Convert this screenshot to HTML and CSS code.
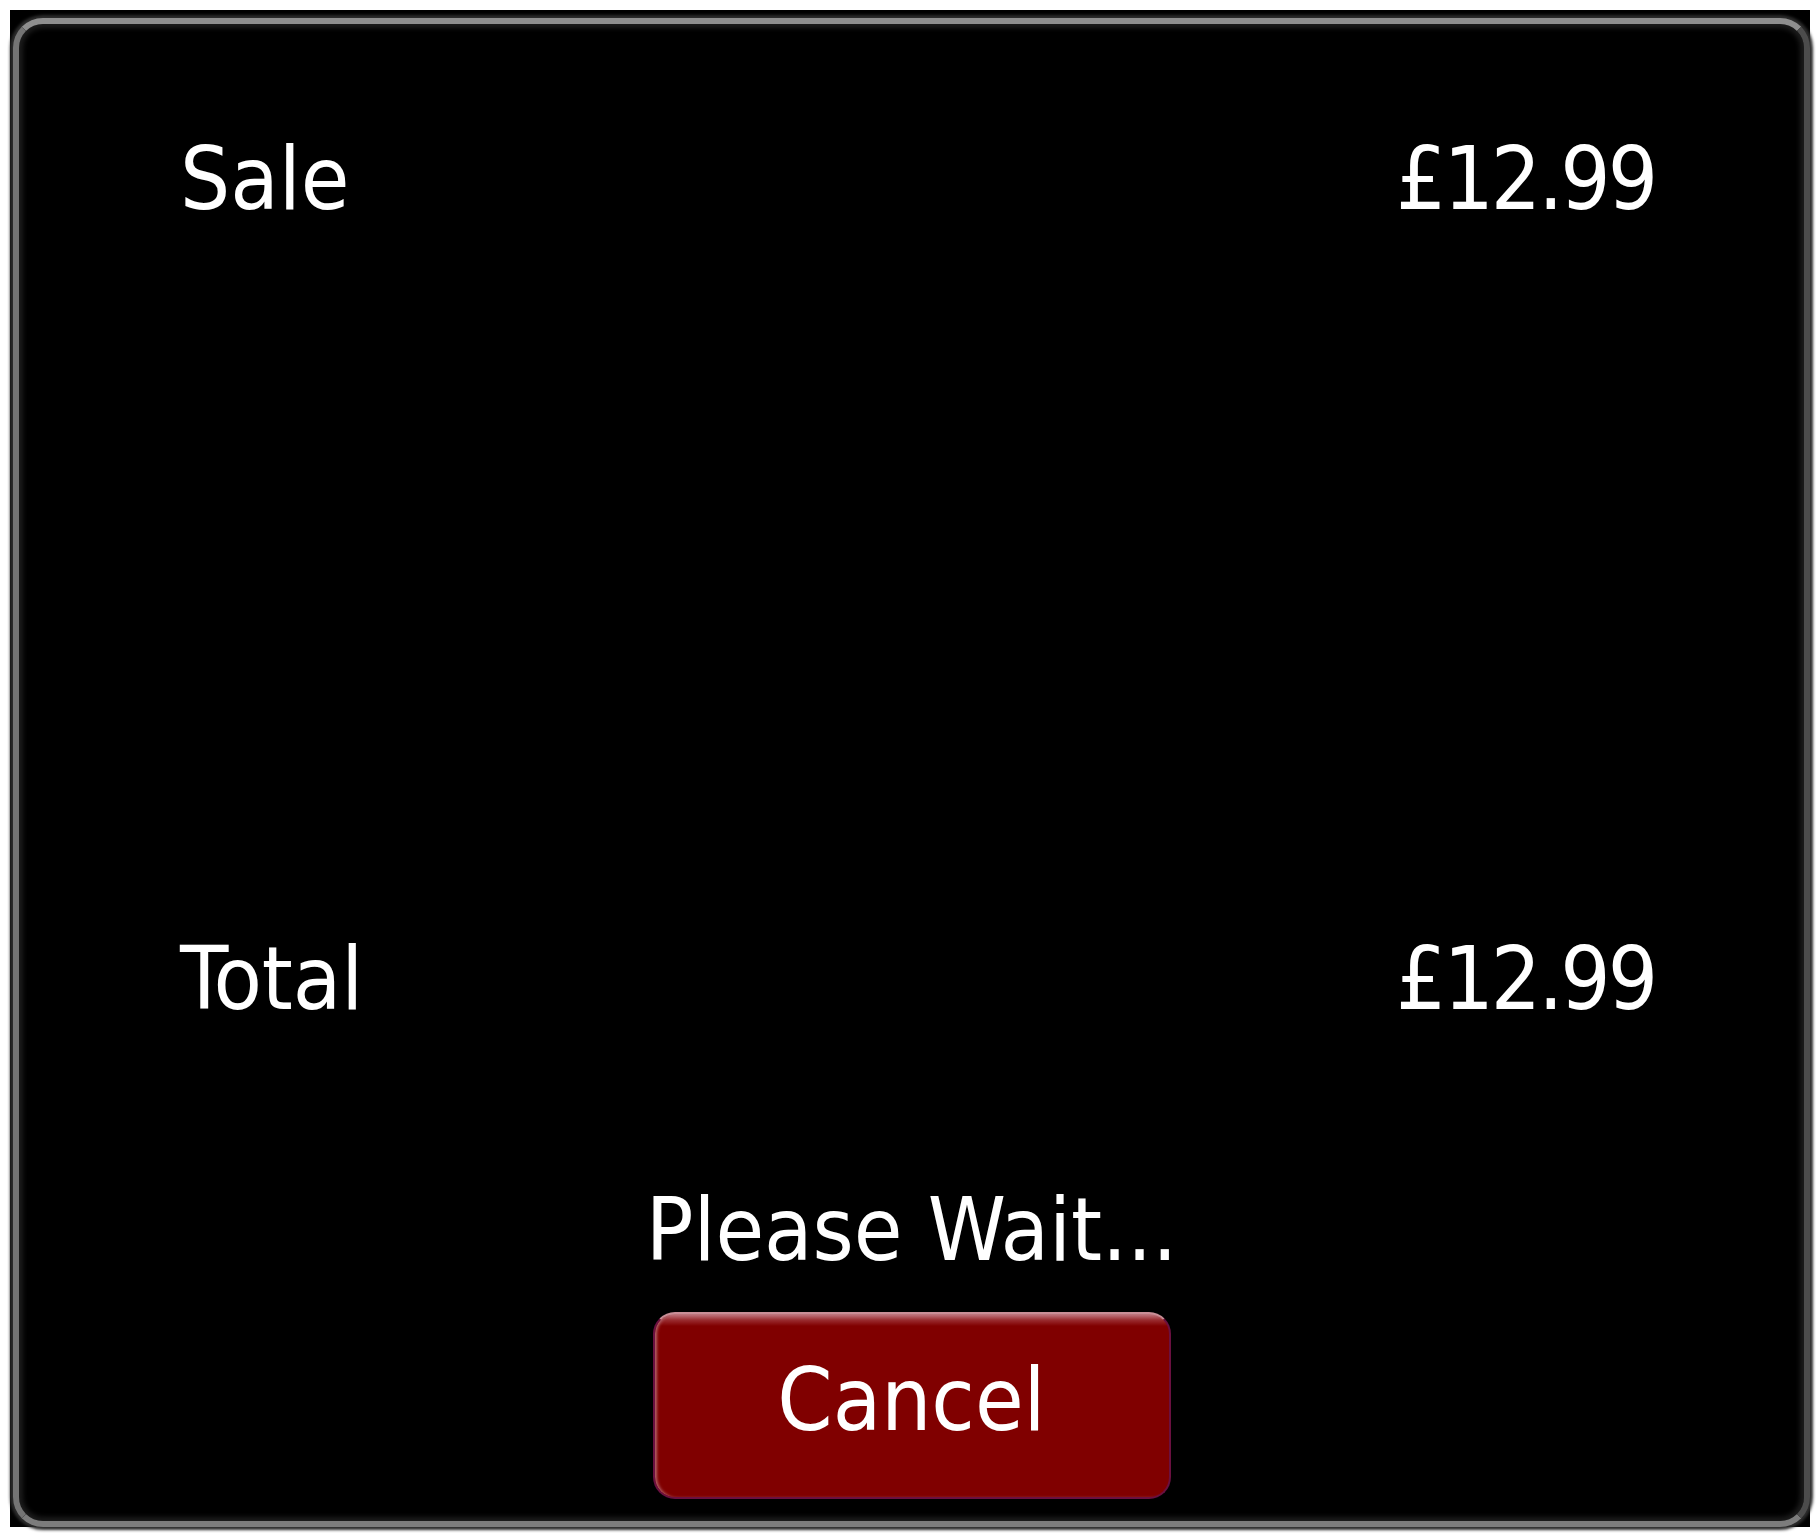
FILE: index.html
```html
<!DOCTYPE html>
<html lang="en">
<head>
    <meta charset="UTF-8">
    <title>Payment</title>
    <link rel="stylesheet" href="styles.css">
</head>
<body>
    <div class="screen">
        <div class="frame">
            <div class="row row-sale">
                <span>Sale</span>
                <span class="amount">£12.99</span>
            </div>

            <div class="row row-total">
                <span>Total</span>
                <span class="amount">£12.99</span>
            </div>

            <div class="status">
                <p class="wait">Please Wait...</p>
                <button class="cancel">Cancel</button>
            </div>
        </div>
    </div>
</body>
</html>
```

FILE: styles.css
```css
body {
    margin: 0;
    background-color: #fff;
    font-family: "DejaVu Sans", Tahoma, sans-serif;
    font-stretch: condensed;
    color: #fff;
}
.screen {
    margin: 10px;
    width: 1800px;
    height: 1517px;
    padding: 8px 0 0 3px;
    box-sizing: border-box;
    background-color: #000;
}
.frame {
    height: 100%;
    box-sizing: border-box;
    border: 6px solid;
    border-color: #8e8e8e #4c4c4c #7c7c7c #747474;
    border-radius: 30px;
    box-shadow: 0 0 3px 3px #2c2c2c, inset 0 0 5px 4px #1c1c1c;
    background-color: #000;
    display: flex;
    flex-direction: column;
}
.row {
    display: flex;
    justify-content: space-between;
    padding: 0 149px 0 161px;
    font-size: 88px;
    line-height: 88px;
}
.amount {
    letter-spacing: -3px;
}
.row-sale {
    padding-top: 111px;
}
.row-total {
    margin-top: auto;
}
.status {
    display: flex;
    flex-direction: column;
    align-items: center;
    padding: 163px 0 22px;
}
.wait {
    margin: 0 0 38px;
    font-size: 88px;
    line-height: 88px;
}
.cancel {
    width: 518px;
    height: 187px;
    box-sizing: border-box;
    padding: 42px 0 57px;
    border: 2px solid #6a1040;
    border-top-color: #c98e96;
    border-radius: 22px;
    background: linear-gradient(#c47e86 0, #9a2c30 6px, #800000 12px);
    box-shadow: inset 3px 0 3px -1px #b06068;
    color: #fff;
    font-family: inherit;
    font-stretch: condensed;
    font-size: 88px;
    line-height: 88px;
    cursor: pointer;
}
```
